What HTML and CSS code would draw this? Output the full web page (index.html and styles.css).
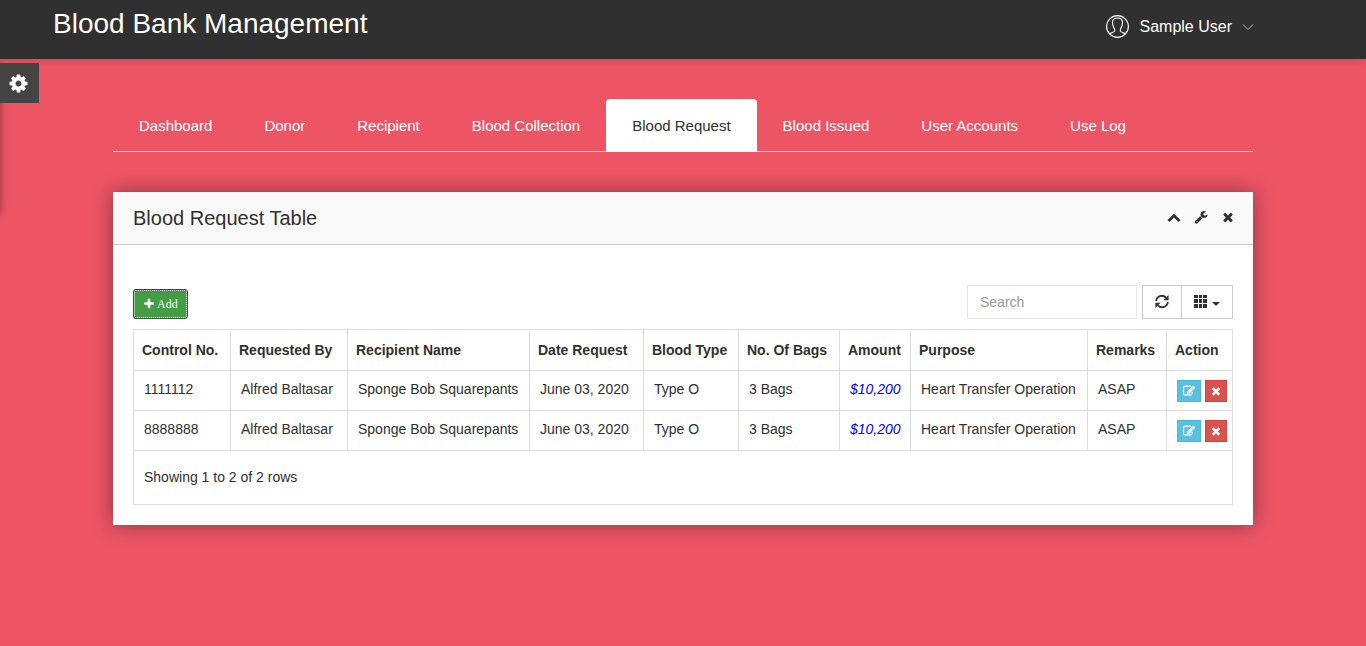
FILE: index.html
```html
<!DOCTYPE html>
<html lang="en">
<head>
<meta charset="utf-8">
<title>Blood Bank Management</title>
<meta name="viewport" content="width=device-width, initial-scale=1">
<link rel="stylesheet" href="styles.css">
</head>
<body>
<svg class="sprite" aria-hidden="true">
  <symbol id="i-cog" viewBox="0 0 1792 1792"><path d="M1152 896q0-106-75-181t-181-75-181 75-75 181 75 181 181 75 181-75 75-181zm512-109v222q0 12-8 23t-20 13l-185 28q-19 54-39 91 35 50 107 138 10 12 10 25t-9 23q-27 37-99 108t-94 71q-12 0-26-9l-138-108q-44 23-91 38-16 136-29 186-7 28-36 28h-222q-14 0-24.5-8.5t-11.5-21.5l-28-184q-49-16-90-37l-141 107q-10 9-25 9-14 0-25-11-126-114-165-168-7-10-7-23 0-12 8-23 15-21 51-66.500t54-70.500q-27-50-41-99l-183-27q-13-2-21-12.500t-8-23.500v-222q0-12 8-23t19-13l186-28q14-46 39-92-40-57-107-138-10-12-10-24 0-10 9-23 26-36 98.500-107.500t94.500-71.500q13 0 26 10l138 107q44-23 91-38 16-136 29-186 7-28 36-28h222q14 0 24.500 8.500t11.500 21.500l28 184q49 16 90 37l142-107q9-9 24-9 13 0 25 10 129 119 165 170 7 8 7 22 0 12-8 23-15 21-51 66.500t-54 70.500q26 50 41 98l183 28q13 2 21 12.500t8 23.500z"/></symbol>
  <symbol id="i-up" viewBox="0 0 1792 1792"><path d="M1683 1331l-166 165q-19 19-45 19t-45-19l-531-531-531 531q-19 19-45 19t-45-19l-166-165q-19-19-19-45.500t19-45.500l742-741q19-19 45-19t45 19l742 741q19 19 19 45.500t-19 45.500z"/></symbol>
  <symbol id="i-wrench" viewBox="0 0 1792 1792"><path d="M448 1472q0-26-19-45t-45-19-45 19-19 45 19 45 45 19 45-19 19-45zm644-420l-682 682q-37 37-90 37-52 0-91-37l-106-108q-38-36-38-90 0-53 38-91l681-681q39 98 114.500 173.500t173.500 114.500zm634-435q0 39-23 106-47 134-164.500 217.500t-258.500 83.500q-185 0-316.500-131.500t-131.500-316.500 131.500-316.500 316.500-131.500q58 0 121.500 16.500t107.500 46.500q16 11 16 28t-16 28l-293 169v224l193 107q5-3 79-48.500t135.500-81 70.500-35.500q15 0 23.500 10t8.500 25z"/></symbol>
  <symbol id="i-times" viewBox="0 0 1792 1792"><path d="M1490 1322q0 40-28 68l-136 136q-28 28-68 28t-68-28l-294-294-294 294q-28 28-68 28t-68-28l-136-136q-28-28-28-68t28-68l294-294-294-294q-28-28-28-68t28-68l136-136q28-28 68-28t68 28l294 294 294-294q28-28 68-28t68 28l136 136q28 28 28 68t-28 68l-294 294 294 294q28 28 28 68z"/></symbol>
  <symbol id="i-edit" viewBox="0 0 1792 1792"><path d="M888 1184l116-116-152-152-116 116v56h96v96h56zm440-720q-16-16-33 1l-350 350q-17 17-1 33t33-1l350-350q17-17 1-33zm80 594v190q0 119-84.500 203.500t-203.500 84.500h-832q-119 0-203.500-84.500t-84.500-203.500v-832q0-119 84.500-203.500t203.500-84.500h832q63 0 117 25 15 7 18 23 3 17-9 29l-49 49q-14 14-32 8-23-6-45-6h-832q-66 0-113 47t-47 113v832q0 66 47 113t113 47h832q66 0 113-47t47-113v-126q0-13 9-22l64-64q15-15 35-7t20 29zm-96-738l288 288-672 672h-288v-288zm444 132l-92 92-288-288 92-92q28-28 68-28t68 28l152 152q28 28 28 68t-28 68z"/></symbol>
  <symbol id="i-plus" viewBox="0 0 1792 1792"><path d="M1600 736v192q0 40-28 68t-68 28h-416v416q0 40-28 68t-68 28h-192q-40 0-68-28t-28-68v-416h-416q-40 0-68-28t-28-68v-192q0-40 28-68t68-28h416v-416q0-40 28-68t68-28h192q40 0 68 28t28 68v416h416q40 0 68 28t28 68z"/></symbol>
</svg>

<header class="topbar">
  <h1 class="brand">Blood Bank Management</h1>
  <button class="user" type="button">
    <svg class="avatar" viewBox="0 0 24 24" aria-hidden="true"><circle cx="11.500" cy="11.500" r="10.900"/><path d="M3.500 19c1.500-1.700 4.600-1.500 5.200-2.900.6-1.300-.2-2.500-1-3.700C6.700 10.800 6.500 9.500 6.500 7.500c0-2.800 2-4.500 5-4.500s5 1.700 5 4.500c0 2-.2 3.300-1.200 4.900-.8 1.200-1.600 2.400-1 3.700.6 1.400 3.700 1.200 5.200 2.900"/></svg>
    <span>Sample User</span>
    <svg class="caret-thin" viewBox="0 0 12 8" aria-hidden="true"><path d="M1 1.500l5 5 5-5"/></svg>
  </button>
</header>

<aside class="settings">
  <button class="settings-toggle" type="button" aria-label="Settings"><svg class="icon icon-cog"><use href="#i-cog"/></svg></button>
</aside>

<main class="container">
  <nav class="tabs">
    <a class="tab" href="#dashboard">Dashboard</a>
    <a class="tab" href="#donor">Donor</a>
    <a class="tab" href="#recipient">Recipient</a>
    <a class="tab" href="#collection">Blood Collection</a>
    <a class="tab tab-active" href="#request" aria-current="page">Blood Request</a>
    <a class="tab" href="#issued">Blood Issued</a>
    <a class="tab" href="#accounts">User Accounts</a>
    <a class="tab" href="#log">Use Log</a>
  </nav>

  <section class="panel">
    <div class="panel-head">
      <h2 class="panel-title">Blood Request Table</h2>
      <div class="panel-tools">
        <button class="tool" type="button" aria-label="Collapse"><svg class="icon"><use href="#i-up"/></svg></button>
        <button class="tool" type="button" aria-label="Configure"><svg class="icon"><use href="#i-wrench"/></svg></button>
        <button class="tool" type="button" aria-label="Close"><svg class="icon"><use href="#i-times"/></svg></button>
      </div>
    </div>
    <div class="panel-body">
      <div class="toolbar">
        <button class="add" type="button"><svg class="icon icon-small"><use href="#i-plus"/></svg>Add</button>
        <div class="toolbar-right">
          <input class="search" type="text" placeholder="Search" aria-label="Search">
          <div class="group">
            <button class="group-btn" type="button" aria-label="Refresh">
              <svg class="icon" viewBox="0 0 14 14"><path class="arc" d="M1.200 6A5.600 5.600 0 0 1 11 2.700M12.800 7A5.600 5.600 0 0 1 3 10.300"/><path d="M13.600 0v5.200H8.400zM.4 13V7.800h5.200z"/></svg>
            </button>
            <button class="group-btn" type="button" aria-label="Columns">
              <svg class="icon" viewBox="0 0 14 14"><path d="M0 0h4v3H0zM5 0h3v3H5zM9 0h4v3H9zM0 4h4v4H0zM5 4h3v4H5zM9 4h4v4H9zM0 9h4v4H0zM5 9h3v4H5zM9 9h4v4H9z"/></svg>
              <span class="caret"></span>
            </button>
          </div>
        </div>
      </div>
      <table class="requests">
        <colgroup>
          <col class="c-control"><col class="c-by"><col class="c-name"><col class="c-date"><col class="c-type"><col class="c-bags"><col class="c-amount"><col class="c-purpose"><col class="c-remarks"><col>
        </colgroup>
        <thead>
          <tr><th>Control No.</th><th>Requested By</th><th>Recipient Name</th><th>Date Request</th><th>Blood Type</th><th>No. Of Bags</th><th>Amount</th><th>Purpose</th><th>Remarks</th><th>Action</th></tr>
        </thead>
        <tbody>
          <tr><td>1111112</td><td>Alfred Baltasar</td><td>Sponge Bob Squarepants</td><td>June 03, 2020</td><td>Type O</td><td>3 Bags</td><td class="amount">$10,200</td><td>Heart Transfer Operation</td><td>ASAP</td>
            <td><div class="actions"><button class="act act-edit" type="button" aria-label="Edit"><svg class="icon icon-small icon-edit"><use href="#i-edit"/></svg></button><button class="act act-delete" type="button" aria-label="Delete"><svg class="icon icon-small"><use href="#i-times"/></svg></button></div></td></tr>
          <tr><td>8888888</td><td>Alfred Baltasar</td><td>Sponge Bob Squarepants</td><td>June 03, 2020</td><td>Type O</td><td>3 Bags</td><td class="amount">$10,200</td><td>Heart Transfer Operation</td><td>ASAP</td>
            <td><div class="actions"><button class="act act-edit" type="button" aria-label="Edit"><svg class="icon icon-small icon-edit"><use href="#i-edit"/></svg></button><button class="act act-delete" type="button" aria-label="Delete"><svg class="icon icon-small"><use href="#i-times"/></svg></button></div></td></tr>
        </tbody>
      </table>
      <div class="summary">Showing 1 to 2 of 2 rows</div>
    </div>
  </section>
</main>
</body>
</html>
```
FILE: styles.css
```css
* { box-sizing: border-box; }

body {
  margin: 0;
  min-height: 100vh;
  background: #ed5565;
  color: #303030;
  font: 14px/20px "Liberation Sans", Arial, sans-serif;
}

button { font: inherit; color: inherit; cursor: pointer; }

.sprite { display: none; }
.icon { display: block; width: 14px; height: 14px; fill: currentColor; }
.icon-small { width: 12px; height: 12px; }
.icon-edit { stroke: currentColor; stroke-width: 60; }
.icon-cog { width: 21px; height: 21px; }

/* Top bar */
.topbar {
  display: flex;
  justify-content: space-between;
  align-items: flex-start;
  padding: 6px 112px 17px 53px;
  background: #303030;
  color: #fff;
  box-shadow: 0 0 10px rgba(0, 0, 0, .2);
}
.brand { margin: 0; font-size: 28px; line-height: 36px; font-weight: 400; }
.user {
  display: flex;
  align-items: center;
  gap: 10px;
  padding: 9px 0 0;
  border: 0;
  background: none;
  font-size: 16px;
  line-height: 24px;
}
.avatar { width: 24px; height: 24px; fill: none; stroke: #fff; stroke-width: 1.100; }
.caret-thin { width: 12px; height: 8px; fill: none; stroke: #bbb; stroke-width: 1; }

/* Settings drawer, closed at the left edge */
.settings {
  position: absolute;
  top: 63px;
  right: 100%;
  width: 200px;
  height: 150px;
  box-shadow: 0 0 8px rgba(0, 0, 0, .4);
}
.settings-toggle {
  position: absolute;
  top: 0;
  left: 100%;
  display: grid;
  place-items: center;
  width: 39px;
  height: 40px;
  padding: 0 2px 0 0;
  border: 0;
  background: #444;
  color: #fff;
}

.container { max-width: 1140px; margin: 0 auto; padding: 40px 0; }

/* Tabs */
.tabs { display: flex; border-bottom: 1px solid #f5c9cd; }
.tab {
  margin-bottom: -1px;
  padding: 17px 26px 16px;
  border-radius: 4px 4px 0 0;
  color: #fff;
  font-size: 15px;
  text-decoration: none;
}
.tab-active { background: #fff; color: #303030; }

/* Panel */
.panel { margin-top: 40px; background: #fff; box-shadow: 0 0 20px rgba(0, 0, 0, .4); }
.panel-head {
  display: flex;
  justify-content: space-between;
  align-items: flex-start;
  padding: 12px 18px 12px 20px;
  border-bottom: 1px solid #ccc;
  background: #f9f9f9;
}
.panel-title { margin: 0; font-size: 20px; line-height: 28px; font-weight: 400; }
.panel-tools { display: flex; gap: 13px; padding-top: 6px; }
.tool { padding: 0; border: 0; background: none; }
.panel-body { padding: 40px 20px 20px; }

.toolbar { display: flex; justify-content: space-between; align-items: flex-end; margin-bottom: 10px; }
.add {
  display: flex;
  align-items: center;
  gap: 2px;
  height: 30px;
  padding: 0 9px;
  border: 1px solid #2b542c;
  border-radius: 3px;
  outline: 1px dotted #fff;
  outline-offset: -2px;
  background: #449d44;
  color: #fff;
  font: 12px/18px "Liberation Serif", "Times New Roman", serif;
}
.toolbar-right { display: flex; gap: 5px; }
.search {
  width: 170px;
  height: 34px;
  padding: 0 12px;
  border: 1px solid #e5e6e7;
  border-radius: 0;
  background: #fff;
  color: #555;
  font: inherit;
}
.search::placeholder { color: #999; opacity: 1; }
.group { display: flex; }
.group-btn {
  display: flex;
  align-items: center;
  gap: 4px;
  height: 34px;
  padding: 0 12px;
  border: 1px solid #ccc;
  background: #fff;
}
.group-btn + .group-btn { margin-left: -1px; }
.arc { fill: none; stroke: currentColor; stroke-width: 1.800; }
.caret { margin-top: 4px; border-top: 4px solid; border-right: 4px solid transparent; border-left: 4px solid transparent; }

/* Table */
.requests { width: 100%; table-layout: fixed; border-collapse: collapse; white-space: nowrap; }
.requests th, .requests td { border: 1px solid #ddd; text-align: left; }
.requests th { padding: 10px 8px; font-weight: 700; }
.requests td { padding: 8px 0 8px 10px; vertical-align: top; }
.requests .amount { color: #00f; font-style: italic; }
.c-control { width: 97px; }
.c-by { width: 117px; }
.c-name { width: 182px; }
.c-date { width: 114px; }
.c-type { width: 95px; }
.c-bags { width: 101px; }
.c-amount { width: 71px; }
.c-purpose { width: 177px; }
.c-remarks { width: 79px; }

.actions { display: flex; gap: 4px; padding-top: 1px; }
.act { display: grid; place-items: center; width: 22px; height: 22px; padding: 0; color: #fff; }
.act-edit { width: 24px; border: 1px solid #46b8da; background: #5bc0de; }
.act-delete { border: 1px solid #d43f3a; background: #d9534f; }

.summary { padding: 16px 10px 17px; border: 1px solid #ddd; border-top: 0; }
```
